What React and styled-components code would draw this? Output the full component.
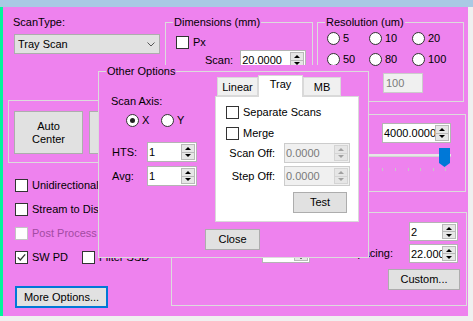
import React from 'react';
import styled, { createGlobalStyle } from 'styled-components';

const VIOLET = '#ee82ee';
const FRAME = '#dcdcdc';

const GlobalStyle = createGlobalStyle`
  * { box-sizing: border-box; }
  html, body { margin: 0; padding: 0; background: #f0f0f0; }
  body {
    font-family: "Liberation Sans", Arial, sans-serif;
    font-size: 11px;
    color: #000;
  }
`;

const Window = styled.div`
  width: 473px;
  height: 321px;
  overflow: hidden;
  display: flex;
  flex-direction: column;
  background: #f0f0f0;
`;

const TopStrip = styled.div`
  flex: none;
  height: 7px;
  background: #a9c9e4;
`;

const Body = styled.div`
  flex: none;
  height: 309px;
  display: flex;
`;

const GreenEdge = styled.div`
  flex: none;
  width: 3px;
  background: #00f59b;
`;

const Form = styled.div`
  position: relative;
  flex: none;
  width: 465px;
  display: flex;
  background: ${VIOLET};
  overflow: hidden;
`;

const LeftColumn = styled.div`
  flex: none;
  width: 162px;
  display: flex;
  flex-direction: column;
  align-items: flex-start;
`;

const RightColumn = styled.div`
  flex: none;
  width: 303px;
  display: flex;
  flex-direction: column;
  align-items: flex-start;
`;

const Text = styled.span`
  display: block;
  flex: none;
  white-space: nowrap;
  line-height: 13px;
  margin: ${p => p.$mt || 0}px 0 0 ${p => p.$ml || 0}px;
  color: ${p => (p.$disabled ? '#a24ba2' : '#000')};
  width: ${p => (p.$w ? `${p.$w}px` : 'auto')};
`;

const RightLabel = styled(Text)`
  text-align: right;
  padding-right: 9px;
`;

const PushedLabel = styled(Text)`
  margin-left: auto;
`;

const Combo = styled.div`
  margin: 5px 0 0 11px;
  width: 146px;
  height: 20px;
  display: flex;
  align-items: center;
  justify-content: space-between;
  padding: 0 4px 0 3px;
  background: #e1e1e1;
  border: 1px solid #adadad;
  line-height: 13px;
`;

const ButtonPanel = styled.div`
  margin: 46px 0 0 5px;
  width: 240px;
  height: 63px;
  flex: none;
  border: 1px solid ${FRAME};
  display: flex;
  gap: 6px;
  padding: 10px 0 0 5px;
`;

const Button = styled.button`
  flex: none;
  font: inherit;
  color: #000;
  width: ${p => p.$w}px;
  height: ${p => p.$h}px;
  margin: ${p => p.$mt || 0}px ${p => p.$mr || 0}px 0 ${p => p.$ml || 0}px;
  padding: 0;
  line-height: 13px;
  text-align: center;
  background: #e1e1e1;
  border: ${p => (p.$focused ? '2px solid #0078d7' : '1px solid #adadad')};
`;

const CheckList = styled.div`
  margin: 16px 0 0 12px;
  display: flex;
  flex-direction: column;
  gap: 11px;
`;

const CheckRow = styled.div`
  display: flex;
  align-items: center;
  gap: 4px;
  height: 13px;
  margin: ${p => p.$mt || 0}px 0 0 ${p => p.$ml || 0}px;
  max-width: ${p => (p.$clip ? `${p.$clip}px` : 'none')};
  overflow: ${p => (p.$clip ? 'hidden' : 'visible')};
`;

const Box = styled.span`
  flex: none;
  width: 13px;
  height: 13px;
  display: flex;
  align-items: center;
  justify-content: center;
  background: #fff;
  border: 1px solid ${p => (p.$disabled ? '#c4c4c4' : '#333')};
`;

const Pair = styled.div`
  display: flex;
  align-items: center;
  gap: 4px;
`;

const TopGroups = styled.div`
  margin-top: 9px;
  display: flex;
  gap: 4px;
`;

const Group = styled.fieldset`
  margin: 0;
  padding: 0;
  min-width: 0;
  flex: none;
  width: ${p => p.$w}px;
  height: ${p => p.$h}px;
  border: 1px solid ${FRAME};
  display: flex;
  flex-direction: column;
  align-items: flex-start;
`;

const Legend = styled.legend`
  margin-left: 7px;
  padding: 0 1px;
  line-height: 13px;
  white-space: nowrap;
`;

const FieldRow = styled.div`
  display: flex;
  align-items: center;
  gap: ${p => p.$gap || 0}px;
  margin: ${p => p.$mt || 0}px 0 0 ${p => p.$ml || 0}px;
`;

const RadioGrid = styled.div`
  margin: 3px 0 0 9px;
  display: grid;
  grid-template-columns: 42px 43px auto;
  row-gap: 8px;
`;

const RadioRow = styled.div`
  display: flex;
  margin: 6px 0 0 27px;
`;

const Radio = styled.div`
  display: flex;
  align-items: center;
  gap: 3px;
  height: 13px;
  width: ${p => (p.$w ? `${p.$w}px` : 'auto')};
  line-height: 13px;
`;

const RadioDot = styled.span`
  flex: none;
  width: 13px;
  height: 13px;
  border-radius: 50%;
  border: 1px solid #333;
  background: #fff;
  display: flex;
  align-items: center;
  justify-content: center;
  &::after {
    content: '';
    width: 5px;
    height: 5px;
    border-radius: 50%;
    background: #222;
    display: ${p => (p.$on ? 'block' : 'none')};
  }
`;

const TextBox = styled.div`
  margin: 7px 0 0 65px;
  width: 40px;
  height: 20px;
  padding-left: 2px;
  line-height: 18px;
  background: #f0f0f0;
  border: 1px solid #cccccc;
  color: #7a7a7a;
`;

const NumBox = styled.div`
  flex: none;
  display: flex;
  width: ${p => p.$w}px;
  height: ${p => p.$h || 20}px;
  margin: ${p => p.$mt || 0}px ${p => p.$mr || 0}px 0 ${p => p.$ml || 0}px;
  background: ${p => (p.$disabled ? '#f0f0f0' : '#fff')};
  border: 1px solid ${p => (p.$disabled ? '#cccccc' : '#b4b4b4')};
`;

const NumText = styled.span`
  flex: 1;
  min-width: 0;
  overflow: hidden;
  white-space: nowrap;
  padding-left: 1px;
  display: flex;
  align-items: center;
  color: ${p => (p.$disabled ? '#7a7a7a' : '#000')};
`;

const Spin = styled.span`
  flex: none;
  width: 15px;
  display: flex;
  flex-direction: column;
  padding: 1px 1px 1px 0;
`;

const SpinButton = styled.span`
  flex: 1;
  display: flex;
  align-items: center;
  justify-content: center;
  background: #e6e6e6;
  border: 1px solid ${p => (p.$disabled ? '#d4d4d4' : '#b9b9b9')};
  & + & { border-top: none; }
`;

const Arrow = styled.span`
  width: 0;
  height: 0;
  border-left: 3px solid transparent;
  border-right: 3px solid transparent;
  ${p =>
    p.$down
      ? `border-top: 3px solid ${p.$disabled ? '#a0a0a0' : '#000'};`
      : `border-bottom: 3px solid ${p.$disabled ? '#a0a0a0' : '#000'};`}
`;

const SliderBox = styled.div`
  align-self: flex-end;
  margin: 12px 2px 0 0;
  width: 136px;
  height: 78px;
  flex: none;
  border: 1px solid ${FRAME};
  display: flex;
  flex-direction: column;
  align-items: flex-end;
`;

const Track = styled.svg`
  display: block;
  margin-top: 3px;
  align-self: stretch;
`;

const LowerBox = styled.div`
  margin: 20px 0 0 6px;
  width: 296px;
  height: 94px;
  flex: none;
  border: 1px solid ${FRAME};
  display: flex;
  flex-direction: column;
  align-items: flex-end;
  padding: 9px 8px 0 0;
`;

const SpacingRow = styled.div`
  align-self: stretch;
  display: flex;
  align-items: center;
  margin-top: 3px;
`;

const Overlay = styled.div`
  position: absolute;
  left: 95px;
  top: 58px;
  width: 271px;
  height: 193px;
  background: ${VIOLET};
`;

const OptionsRow = styled.div`
  display: flex;
  align-items: flex-start;
`;

const OptionsLeft = styled.div`
  flex: none;
  width: 116px;
  display: flex;
  flex-direction: column;
  align-items: flex-start;
`;

const Tabs = styled.div`
  flex: none;
  width: 144px;
  margin-top: -3px;
  display: flex;
  flex-direction: column;
`;

const TabStrip = styled.div`
  height: 21px;
  display: flex;
  align-items: flex-end;
  padding-left: 2px;
`;

const Tab = styled.span`
  position: relative;
  z-index: ${p => (p.$active ? 1 : 0)};
  flex: none;
  width: ${p => p.$w}px;
  height: ${p => (p.$active ? 22 : 19)}px;
  margin-bottom: ${p => (p.$active ? -1 : 0)}px;
  padding-top: ${p => (p.$active ? 2 : 3)}px;
  text-align: center;
  line-height: 13px;
  background: ${p => (p.$active ? '#fff' : '#f0f0f0')};
  border: 1px solid #d9d9d9;
  border-bottom: ${p => (p.$active ? 'none' : '1px solid #d9d9d9')};
`;

const TabPage = styled.div`
  height: 126px;
  background: #fff;
  border: 1px solid #d9d9d9;
  display: flex;
  flex-direction: column;
  align-items: flex-start;
`;

const OffsetGrid = styled.div`
  margin-top: 3px;
  display: grid;
  grid-template-columns: 68px 66px;
  grid-auto-rows: 20px;
  row-gap: 3px;
  align-items: center;
`;

const Check = ({ on, disabled }) => (
  <Box $disabled={disabled}>
    {on && (
      <svg width="9" height="9" viewBox="0 0 9 9">
        <polyline points="0.8,4.4 3.3,7 8.2,1.4" fill="none" stroke="#333" strokeWidth="1.3" />
      </svg>
    )}
  </Box>
);

const CheckItem = ({ label, on, disabled, mt, ml, clip }) => (
  <CheckRow $mt={mt} $ml={ml} $clip={clip}>
    <Check on={on} disabled={disabled} />
    <Text $disabled={disabled}>{label}</Text>
  </CheckRow>
);

const Numeric = ({ value, w, h, disabled, mt, ml, mr }) => (
  <NumBox $w={w} $h={h} $disabled={disabled} $mt={mt} $ml={ml} $mr={mr}>
    <NumText $disabled={disabled}>{value}</NumText>
    <Spin>
      <SpinButton $disabled={disabled}><Arrow $disabled={disabled} /></SpinButton>
      <SpinButton $disabled={disabled}><Arrow $down $disabled={disabled} /></SpinButton>
    </Spin>
  </NumBox>
);

const RadioItem = ({ label, on, w }) => (
  <Radio $w={w}>
    <RadioDot $on={on} />
    <span>{label}</span>
  </Radio>
);

const ticks = [12, 25, 38, 51, 64, 77, 89, 102, 114];

const Slider = () => (
  <Track width="134" height="26" viewBox="0 0 134 26">
    <rect x="8" y="8" width="112" height="3" fill="#e6e6e6" />
    <line x1="8" y1="10.5" x2="120" y2="10.5" stroke="#d2d2d2" />
    {ticks.map(x => (
      <line key={x} x1={x + 0.5} y1="22" x2={x + 0.5} y2="25" stroke="#c6c6c6" />
    ))}
    <path d="M108 2 H119 V17 L113.5 21 L108 17 Z" fill="#0078d7" />
  </Track>
);

export default function App() {
  return (
    <Window>
      <GlobalStyle />
      <TopStrip />
      <Body>
        <GreenEdge />
        <Form>
          <LeftColumn>
            <Text $mt={9} $ml={10}>ScanType:</Text>
            <Combo>
              <span>Tray Scan</span>
              <svg width="8" height="5" viewBox="0 0 8 5">
                <polyline points="0.5,0.5 4,4 7.5,0.5" fill="none" stroke="#555" />
              </svg>
            </Combo>
            <ButtonPanel>
              <Button $w={69} $h={43}>Auto<br />Center</Button>
              <Button $w={69} $h={43}>Auto<br />Focus</Button>
            </ButtonPanel>
            <CheckList>
              <CheckItem label="Unidirectional" />
              <CheckItem label="Stream to Disk" clip={83} />
              <CheckItem label="Post Process" disabled />
              <Pair>
                <CheckItem label="SW PD" on />
                <CheckItem label="Filter SSD" ml={10} />
              </Pair>
            </CheckList>
            <Button $w={93} $h={22} $mt={22} $ml={12} $focused>More Options...</Button>
          </LeftColumn>

          <RightColumn>
            <TopGroups>
              <Group $w={148} $h={86}>
                <Legend>Dimensions (mm)</Legend>
                <CheckItem label="Px" mt={7} ml={10} />
                <FieldRow $mt={1} $ml={39} $gap={7}>
                  <Text>Scan:</Text>
                  <Numeric value="20.0000" w={66} />
                </FieldRow>
              </Group>
              <Group $w={147} $h={86}>
                <Legend>Resolution (um)</Legend>
                <RadioGrid>
                  <RadioItem label="5" />
                  <RadioItem label="10" />
                  <RadioItem label="20" />
                  <RadioItem label="50" />
                  <RadioItem label="80" />
                  <RadioItem label="100" />
                </RadioGrid>
                <TextBox>100</TextBox>
              </Group>
            </TopGroups>

            <SliderBox>
              <Numeric value="4000.0000" w={69} mt={8} mr={14} />
              <Slider />
            </SliderBox>

            <LowerBox>
              <Numeric value="2" w={49} h={19} />
              <SpacingRow>
                <Numeric value="10" w={48} h={19} ml={90} />
                <PushedLabel>Spacing:</PushedLabel>
                <Numeric value="22.0000" w={49} h={19} ml={16} />
              </SpacingRow>
              <Button $w={72} $h={21} $mt={6} $mr={-2}>Custom...</Button>
            </LowerBox>
          </RightColumn>

          <Overlay>
            <Group $w={271} $h={193}>
              <Legend>Other Options</Legend>
              <OptionsRow>
                <OptionsLeft>
                  <Text $mt={17} $ml={12}>Scan Axis:</Text>
                  <RadioRow>
                    <RadioItem label="X" on w={35} />
                    <RadioItem label="Y" />
                  </RadioRow>
                  <FieldRow $mt={15} $ml={13}>
                    <Text $w={35}>HTS:</Text>
                    <Numeric value="1" w={50} />
                  </FieldRow>
                  <FieldRow $mt={4} $ml={13}>
                    <Text $w={35}>Avg:</Text>
                    <Numeric value="1" w={50} />
                  </FieldRow>
                </OptionsLeft>
                <Tabs>
                  <TabStrip>
                    <Tab $w={41}>Linear</Tab>
                    <Tab $w={45} $active>Tray</Tab>
                    <Tab $w={38}>MB</Tab>
                  </TabStrip>
                  <TabPage>
                    <CheckItem label="Separate Scans" mt={9} ml={10} />
                    <CheckItem label="Merge" mt={8} ml={10} />
                    <OffsetGrid>
                      <RightLabel>Scan Off:</RightLabel>
                      <Numeric value="0.0000" w={66} disabled />
                      <RightLabel>Step Off:</RightLabel>
                      <Numeric value="0.0000" w={66} disabled />
                    </OffsetGrid>
                    <Button $w={54} $h={21} $mt={6} $ml={77}>Test</Button>
                  </TabPage>
                </Tabs>
              </OptionsRow>
              <Button $w={55} $h={21} $mt={7} $ml={106}>Close</Button>
            </Group>
          </Overlay>
        </Form>
      </Body>
    </Window>
  );
}
